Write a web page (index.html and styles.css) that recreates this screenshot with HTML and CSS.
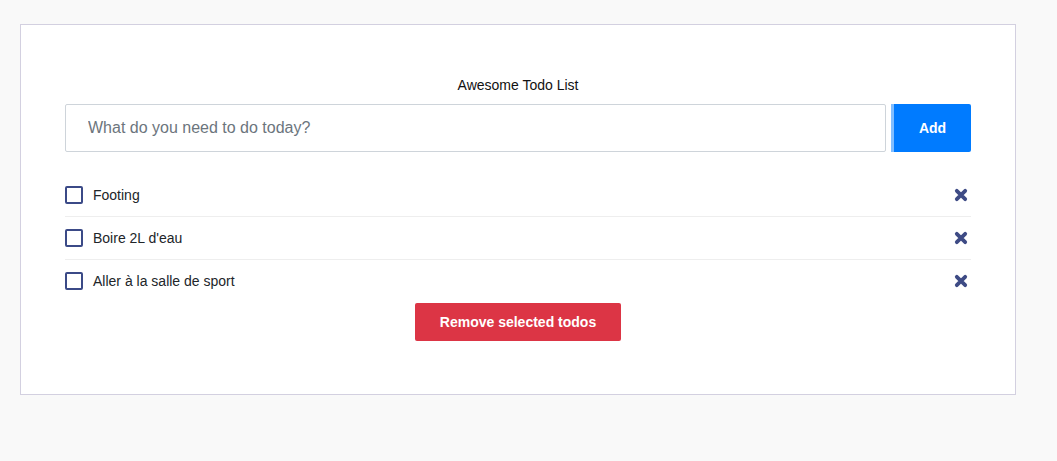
FILE: index.html
```html
<!DOCTYPE html>
<html lang="fr">
<head>
<meta charset="utf-8">
<title>Awesome Todo List</title>
<link rel="stylesheet" href="styles.css">
</head>
<body>
<div class="card">
  <h1 class="title">Awesome Todo List</h1>
  <form class="add-form">
    <input class="add-input" type="text" placeholder="What do you need to do today?">
    <button class="add-btn" type="button">Add</button>
  </form>
  <ul class="todos">
    <li class="todo">
      <span class="check"></span>
      <span class="label">Footing</span>
      <svg class="del" viewBox="0 0 14 14" width="14" height="14"><path d="M2.8 2.8 L11.2 11.2 M11.2 2.8 L2.8 11.2" /></svg>
    </li>
    <li class="todo">
      <span class="check"></span>
      <span class="label">Boire 2L d'eau</span>
      <svg class="del" viewBox="0 0 14 14" width="14" height="14"><path d="M2.8 2.8 L11.2 11.2 M11.2 2.8 L2.8 11.2" /></svg>
    </li>
    <li class="todo">
      <span class="check"></span>
      <span class="label">Aller à la salle de sport</span>
      <svg class="del" viewBox="0 0 14 14" width="14" height="14"><path d="M2.8 2.8 L11.2 11.2 M11.2 2.8 L2.8 11.2" /></svg>
    </li>
  </ul>
  <div class="actions">
    <button class="remove-btn" type="button">Remove selected todos</button>
  </div>
</div>
</body>
</html>
```
FILE: styles.css
```css
html, body {
  margin: 0;
  padding: 0;
}
body {
  background: #f9f9f9;
  font-family: "Liberation Sans", Arial, sans-serif;
  color: #212529;
  padding: 24px 0 0 20px;
  height: 461px;
  box-sizing: border-box;
}
.card {
  width: 996px;
  box-sizing: border-box;
  background: #fff;
  border: 1px solid #d3d0e0;
  padding: 50px 44px 53px;
}
.title {
  margin: 0 0 9px;
  font-size: 14px;
  font-weight: normal;
  line-height: 20px;
  text-align: center;
  color: #111;
}
.add-form {
  display: flex;
  height: 48px;
  margin: 0;
}
.add-input {
  flex: 1;
  min-width: 0;
  height: 48px;
  box-sizing: border-box;
  border: 1px solid #ced4da;
  border-radius: 2px;
  padding: 0 22px;
  font-family: "Liberation Sans", Arial, sans-serif;
  font-size: 16px;
  color: #495057;
  outline: none;
}
.add-input::placeholder {
  color: #6c757d;
}
.add-btn {
  width: 80px;
  margin-left: 5px;
  height: 48px;
  border: none;
  border-left: 3px solid #80bdff;
  border-radius: 0 2px 2px 0;
  background: #007bff;
  color: #fff;
  font-family: "Liberation Sans", Arial, sans-serif;
  font-size: 14px;
  font-weight: bold;
  padding: 0;
}
.todos {
  list-style: none;
  margin: 22px 0 0;
  padding: 0;
}
.todo {
  display: flex;
  align-items: center;
  padding: 12px 0 12px;
  border-bottom: 1px solid #eeeeee;
}
.todo:last-child {
  border-bottom: none;
  padding-bottom: 13px;
}
.check {
  width: 18px;
  height: 18px;
  box-sizing: border-box;
  border: 2px solid #3b4a87;
  border-radius: 2px;
  flex: none;
}
.label {
  margin-left: 10px;
  font-size: 14px;
  line-height: 18px;
  flex: 1;
  color: #212529;
}
.del {
  flex: none;
  margin-right: 3px;
  margin-top: -1px;
  fill: none;
  stroke: #3e4b85;
  stroke-width: 3.8;
  stroke-linecap: round;
}
.actions {
  display: flex;
  justify-content: center;
}
.remove-btn {
  height: 38px;
  padding: 0 25px;
  border: none;
  border-radius: 2px;
  background: #dc3545;
  color: #fff;
  font-family: "Liberation Sans", Arial, sans-serif;
  font-size: 14px;
  font-weight: bold;
}
```
